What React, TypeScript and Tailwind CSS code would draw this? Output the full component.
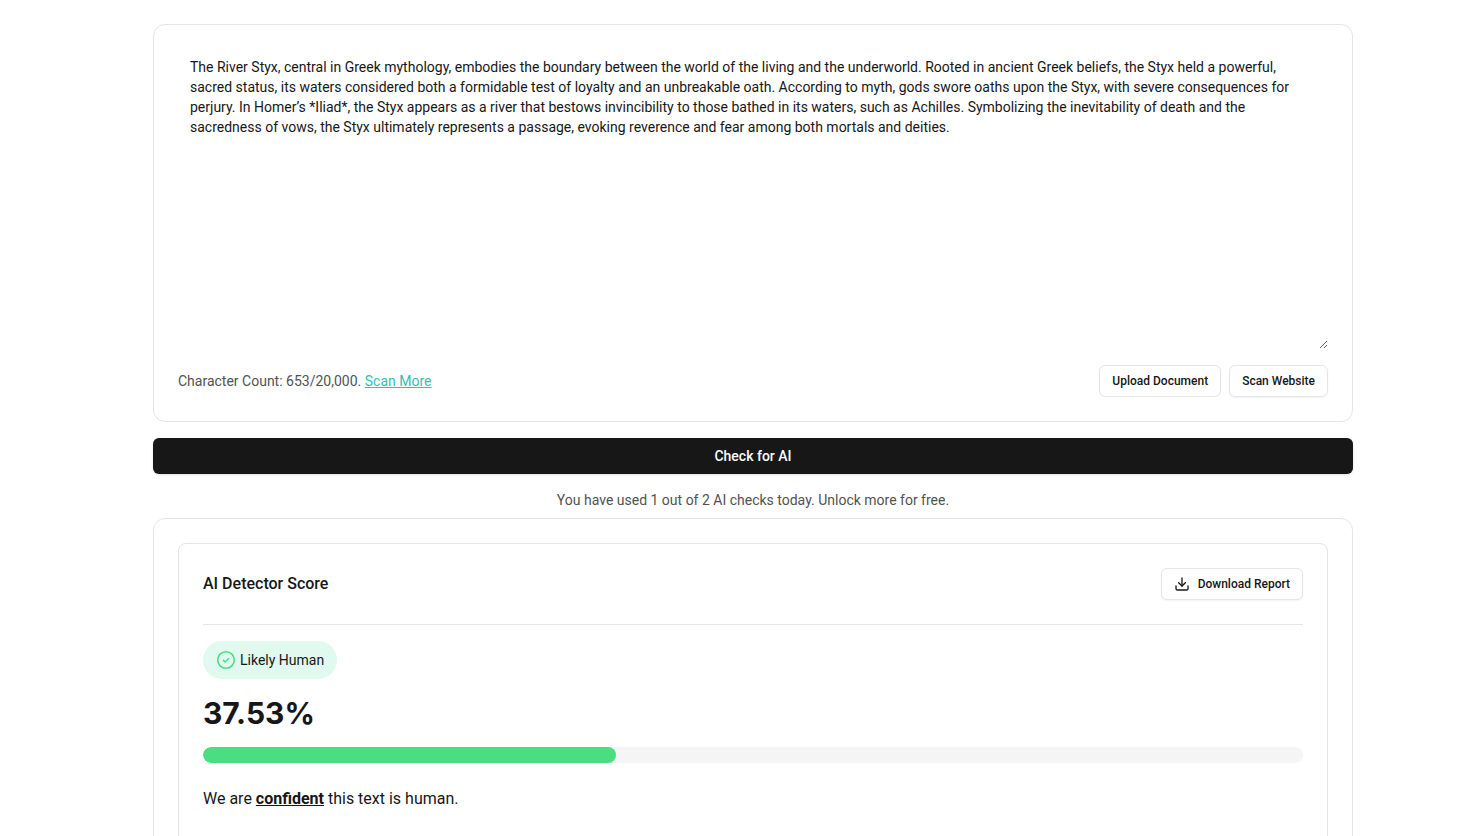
import { useState } from "react";
import { Download } from "lucide-react";

const FREE_LIMIT = 20000;

const SAMPLE_TEXT =
  "The River Styx, central in Greek mythology, embodies the boundary between the world of the living and the underworld. Rooted in ancient Greek beliefs, the Styx held a powerful, sacred status, its waters considered both a formidable test of loyalty and an unbreakable oath. According to myth, gods swore oaths upon the Styx, with severe consequences for perjury. In Homer’s *Iliad*, the Styx appears as a river that bestows invincibility to those bathed in its waters, such as Achilles. Symbolizing the inevitability of death and the sacredness of vows, the Styx ultimately represents a passage, evoking reverence and fear among both mortals and deities.";

function CheckBadgeIcon() {
  return (
    <svg viewBox="0 0 20 20" className="size-5 text-[#4ade80]" fill="none" stroke="currentColor" aria-hidden="true">
      <circle cx="10" cy="10" r="8.3" strokeWidth="1.6" />
      <path d="M7.4 10.2 9.2 12l3.4-3.5" strokeWidth="1.5" strokeLinecap="round" strokeLinejoin="round" />
    </svg>
  );
}

function ScoreCard({ score }: { score: number }) {
  return (
    <section className="rounded-lg border border-neutral-200 p-6 pb-12">
      <div className="flex items-center justify-between border-b border-neutral-200 pb-6">
        <h2 className="text-base font-medium">AI Detector Score</h2>
        <button
          type="button"
          className="flex h-8 items-center gap-2 rounded-md border border-neutral-200 px-3 text-xs font-medium shadow-xs"
        >
          <Download className="size-4" />
          Download Report
        </button>
      </div>
      <div className="mt-4 inline-flex items-center gap-1 rounded-full border border-transparent bg-[#e1faef] px-3 py-2 text-sm">
        <CheckBadgeIcon />
        Likely Human
      </div>
      <p className="mt-4 font-['Inter',sans-serif] text-3xl font-bold">{score}%</p>
      <div className="mt-4 h-4 overflow-hidden rounded-full bg-neutral-100">
        <div className="h-full rounded-full bg-[#4ade80]" style={{ width: `${score}%` }} />
      </div>
      <p className="mt-6 text-base">
        We are <span className="font-bold underline">confident</span> this text is human.
      </p>
    </section>
  );
}

export default function App() {
  const [text, setText] = useState(SAMPLE_TEXT);

  return (
    <main className="h-screen overflow-hidden bg-white pt-6 pl-[34px] font-['Roboto',sans-serif] text-neutral-900">
      <div className="mx-auto max-w-[1200px]">
        <div className="rounded-xl border border-neutral-200 p-6">
          <textarea
            aria-label="Text to check"
            value={text}
            onChange={(e) => setText(e.target.value)}
            spellCheck={false}
            className="block h-[300px] w-full resize-y px-3 py-2 text-sm outline-none"
          />
          <div className="mt-4 flex items-center justify-between">
            <p className="text-sm text-neutral-600">
              Character Count: {text.length}/{FREE_LIMIT.toLocaleString("en-US")}.{" "}
              <a href="#" className="text-[#34bfb3] underline">
                Scan More
              </a>
            </p>
            <div className="flex gap-2">
              <button type="button" className="h-8 rounded-md border border-neutral-200 px-3 text-xs font-medium">
                Upload Document
              </button>
              <button
                type="button"
                className="h-8 rounded-md border border-neutral-200 px-3 text-xs font-medium shadow-xs"
              >
                Scan Website
              </button>
            </div>
          </div>
        </div>
        <button
          type="button"
          className="mt-4 h-9 w-full rounded-md bg-neutral-900 text-sm font-medium text-neutral-50 shadow-sm"
        >
          Check for AI
        </button>
        <p className="mt-4 text-center text-sm text-neutral-600">
          You have used 1 out of 2 AI checks today. Unlock more for free.
        </p>
        <div className="mt-2 rounded-xl border border-neutral-200 p-6">
          <ScoreCard score={37.53} />
        </div>
      </div>
    </main>
  );
}
